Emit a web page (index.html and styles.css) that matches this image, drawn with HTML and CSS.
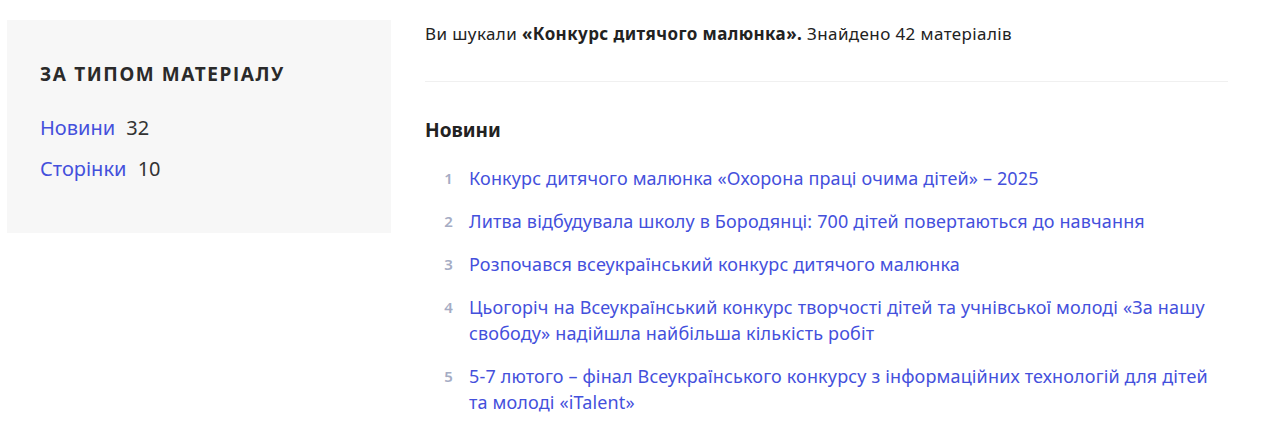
FILE: index.html
```html
<!DOCTYPE html>
<html lang="uk">
<head>
  <meta charset="UTF-8" />
  <title>Пошук — Конкурс дитячого малюнка</title>
  <link rel="stylesheet" href="styles.css">
</head>
<body>

  <div class="page">

    <!-- Filters -->
    <aside class="filters">
      <h3 class="filters-title">За типом матеріалу</h3>
      <ul class="filter-list">
        <li><a href="#news">Новини</a> <span class="count">32</span></li>
        <li><a href="#pages">Сторінки</a> <span class="count">10</span></li>
      </ul>
    </aside>

    <!-- Results -->
    <main class="results">
      <p class="summary">Ви шукали <b>«Конкурс дитячого малюнка».</b> Знайдено 42 матеріалів</p>

      <section id="news">
        <h2 class="group-title">Новини</h2>
        <ol class="result-list">
          <li><a href="#">Конкурс дитячого малюнка «Охорона праці очима дітей» – 2025</a></li>
          <li><a href="#">Литва відбудувала школу в Бородянці: 700 дітей повертаються до навчання</a></li>
          <li><a href="#">Розпочався всеукраїнський конкурс дитячого малюнка</a></li>
          <li><a href="#">Цьогоріч на Всеукраїнський конкурс творчості дітей та учнівської молоді «За нашу свободу» надійшла найбільша кількість робіт</a></li>
          <li><a href="#">5-7 лютого – фінал Всеукраїнського конкурсу з інформаційних технологій для дітей та молоді «iTalent»</a></li>
        </ol>
      </section>
    </main>

  </div>

</body>
</html>
```
FILE: styles.css
```css
body {
  margin: 0;
  background: #fff;
  color: #222;
  font-family: "Noto Sans", "Open Sans", sans-serif;
}

a {
  color: #4450dc;
  text-decoration: none;
}

.page {
  display: flex;
  align-items: flex-start;
  gap: 34px;
  padding: 20px 0 0 7px;
}

/* left column */
.filters {
  width: 384px;
  box-sizing: border-box;
  background: #f7f7f7;
  padding: 41px 33px 37px;
}

.filters-title {
  margin: 0 0 27px;
  font-size: 19px;
  font-weight: 700;
  letter-spacing: 1.6px;
  text-transform: uppercase;
  color: #2a2a2a;
}

.filter-list {
  list-style: none;
  margin: 0;
  padding: 0;
  font-size: 20px;
}

.filter-list li {
  line-height: 28px;
  margin-bottom: 13px;
}

.filter-list .count {
  margin-left: 6px;
  color: #333;
}

/* right column */
.results {
  width: 803px;
}

.summary {
  margin: 0;
  padding: 2px 0 35px;
  font-size: 17px;
  line-height: 24px;
  letter-spacing: 0.4px;
  border-bottom: 1px solid #f0f0f0;
}

.group-title {
  margin: 35px 0 22px;
  font-size: 19px;
  font-weight: 700;
}

.result-list {
  margin: 0;
  padding: 0;
  list-style: none;
  counter-reset: item;
}

.result-list li {
  counter-increment: item;
  display: flex;
  gap: 16px;
  margin-bottom: 17px;
  font-size: 18px;
  line-height: 26px;
  letter-spacing: 0.15px;
}

.result-list li::before {
  content: counter(item);
  width: 28px;
  flex: none;
  text-align: right;
  color: #a5acc4;
  font-size: 15px;
  font-weight: 600;
}
```
